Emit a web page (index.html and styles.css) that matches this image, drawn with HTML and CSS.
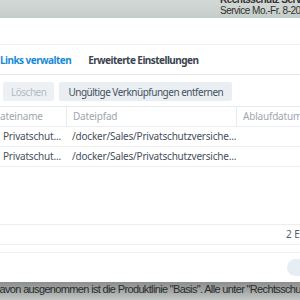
FILE: index.html
```html
<!DOCTYPE html>
<html lang="de">
<head>
  <meta charset="UTF-8" />
  <title>Links verwalten</title>
  <link rel="stylesheet" href="styles.css">
</head>
<body>
  <div class="bg-top">
    <div class="bg-top-text">
      <div class="strong">Rechtsschutz Service</div>
      <div>Service Mo.-Fr. 8-20 Uhr</div>
    </div>
  </div>

  <div class="dialog">
    <div class="dialog-head"></div>

    <div class="tabs">
      <span class="tab active">Links verwalten</span>
      <span class="tab">Erweiterte Einstellungen</span>
    </div>

    <div class="toolbar">
      <button class="btn" disabled>Löschen</button>
      <button class="btn">Ungültige Verknüpfungen entfernen</button>
    </div>

    <div class="table">
      <div class="row head">
        <div class="cell c-name">Dateiname</div>
        <div class="cell c-path">Dateipfad</div>
        <div class="cell c-date">Ablaufdatum</div>
      </div>
      <div class="row">
        <div class="cell c-name">Privatschut...</div>
        <div class="cell c-path">/docker/Sales/Privatschutzversiche...</div>
        <div class="cell c-date"></div>
      </div>
      <div class="row">
        <div class="cell c-name">Privatschut...</div>
        <div class="cell c-path">/docker/Sales/Privatschutzversiche...</div>
        <div class="cell c-date"></div>
      </div>
    </div>

    <div class="pager">2 Einträge</div>

    <div class="dialog-foot">
      <span class="round-btn"></span>
    </div>
  </div>

  <div class="bg-bottom">
    <div>davon ausgenommen ist die Produktlinie "Basis". Alle unter "Rechtsschutz"</div>
  </div>
</body>
</html>
```

FILE: styles.css
```css
html, body {
  margin: 0;
  width: 300px;
  height: 300px;
  overflow: hidden;
}
body {
  font-family: "Noto Sans", "Open Sans", sans-serif;
  background: #fff;
}

/* blurred page behind the dialog */
.bg-top {
  height: 18px;
  overflow: hidden;
  background: linear-gradient(180deg, #d3d9d6, #c5cdca);
  font-family: "Liberation Sans", Arial, sans-serif;
  font-size: 10px;
  line-height: 11px;
  letter-spacing: -0.5px;
  color: #34302e;
}
.bg-top-text {
  margin-top: -6px;
  padding-left: 220px;
  white-space: nowrap;
}
.bg-top-text .strong {
  font-weight: bold;
}

.dialog {
  height: 264px;
  overflow: hidden;
  background: #fff;
  font-size: 10px;
}
.dialog-head {
  height: 26px;
  border-bottom: 1px solid #eef0f2;
}

.tabs {
  display: flex;
  gap: 17px;
  height: 29px;
  align-items: center;
  border-bottom: 1px solid #e4e7ea;
  white-space: nowrap;
}
.tab {
  font-size: 10px;
  font-weight: bold;
  letter-spacing: -0.55px;
  color: #3a444e;
}
.tab.active {
  color: #1a8ad6;
}

.toolbar {
  display: flex;
  gap: 5px;
  padding: 7px 0 0 3px;
  height: 24px;
}
.btn {
  font: inherit;
  font-size: 10px;
  letter-spacing: -0.5px;
  height: 19px;
  padding: 0 9px;
  border: 0;
  border-radius: 2px;
  background: #e9eef3;
  color: #46515c;
  white-space: nowrap;
}
.btn:disabled {
  color: #b3bac2;
  background: #edf1f5;
  padding: 0 8px;
}

.table {
  border-top: 1px solid #e8ebee;
}
.row {
  display: grid;
  grid-template-columns: 66px 170px 80px;
  height: 19px;
  align-items: center;
  border-bottom: 1px solid #eceef1;
  color: #46505b;
  letter-spacing: -0.2px;
  white-space: nowrap;
}
.row.head {
  color: #9ea6ae;
}
.cell {
  overflow: hidden;
  padding-left: 6px;
  height: 19px;
  line-height: 19px;
}
.c-name {
  margin-left: -12px;
  padding-left: 15px;
}
.row.head .c-name {
  padding-left: 5px;
}
.row.head .c-path,
.row.head .c-date {
  border-left: 1px solid #e8ebee;
}

.pager {
  margin-top: 57px;
  height: 19px;
  line-height: 19px;
  border-top: 1px solid #eceef1;
  border-bottom: 1px solid #eceef1;
  padding-left: 286px;
  color: #55606b;
  white-space: nowrap;
}
.dialog-foot {
  margin-top: 7px;
  border-top: 1px solid #f0f2f4;
  padding: 6px 0 0 287px;
}
.round-btn {
  display: block;
  width: 30px;
  height: 17px;
  border-radius: 9px;
  background: #e6edf4;
}

.bg-bottom {
  height: 18px;
  overflow: hidden;
  background: linear-gradient(180deg, #8c8f8e 0, #a1a4a3 45%, #c3c8c6 100%);
  font-family: "Liberation Sans", Arial, sans-serif;
  font-size: 11px;
  line-height: 14px;
  letter-spacing: -0.65px;
  color: #2a2d2c;
  white-space: nowrap;
}
.bg-bottom div {
  margin-left: -6px;
}
```
